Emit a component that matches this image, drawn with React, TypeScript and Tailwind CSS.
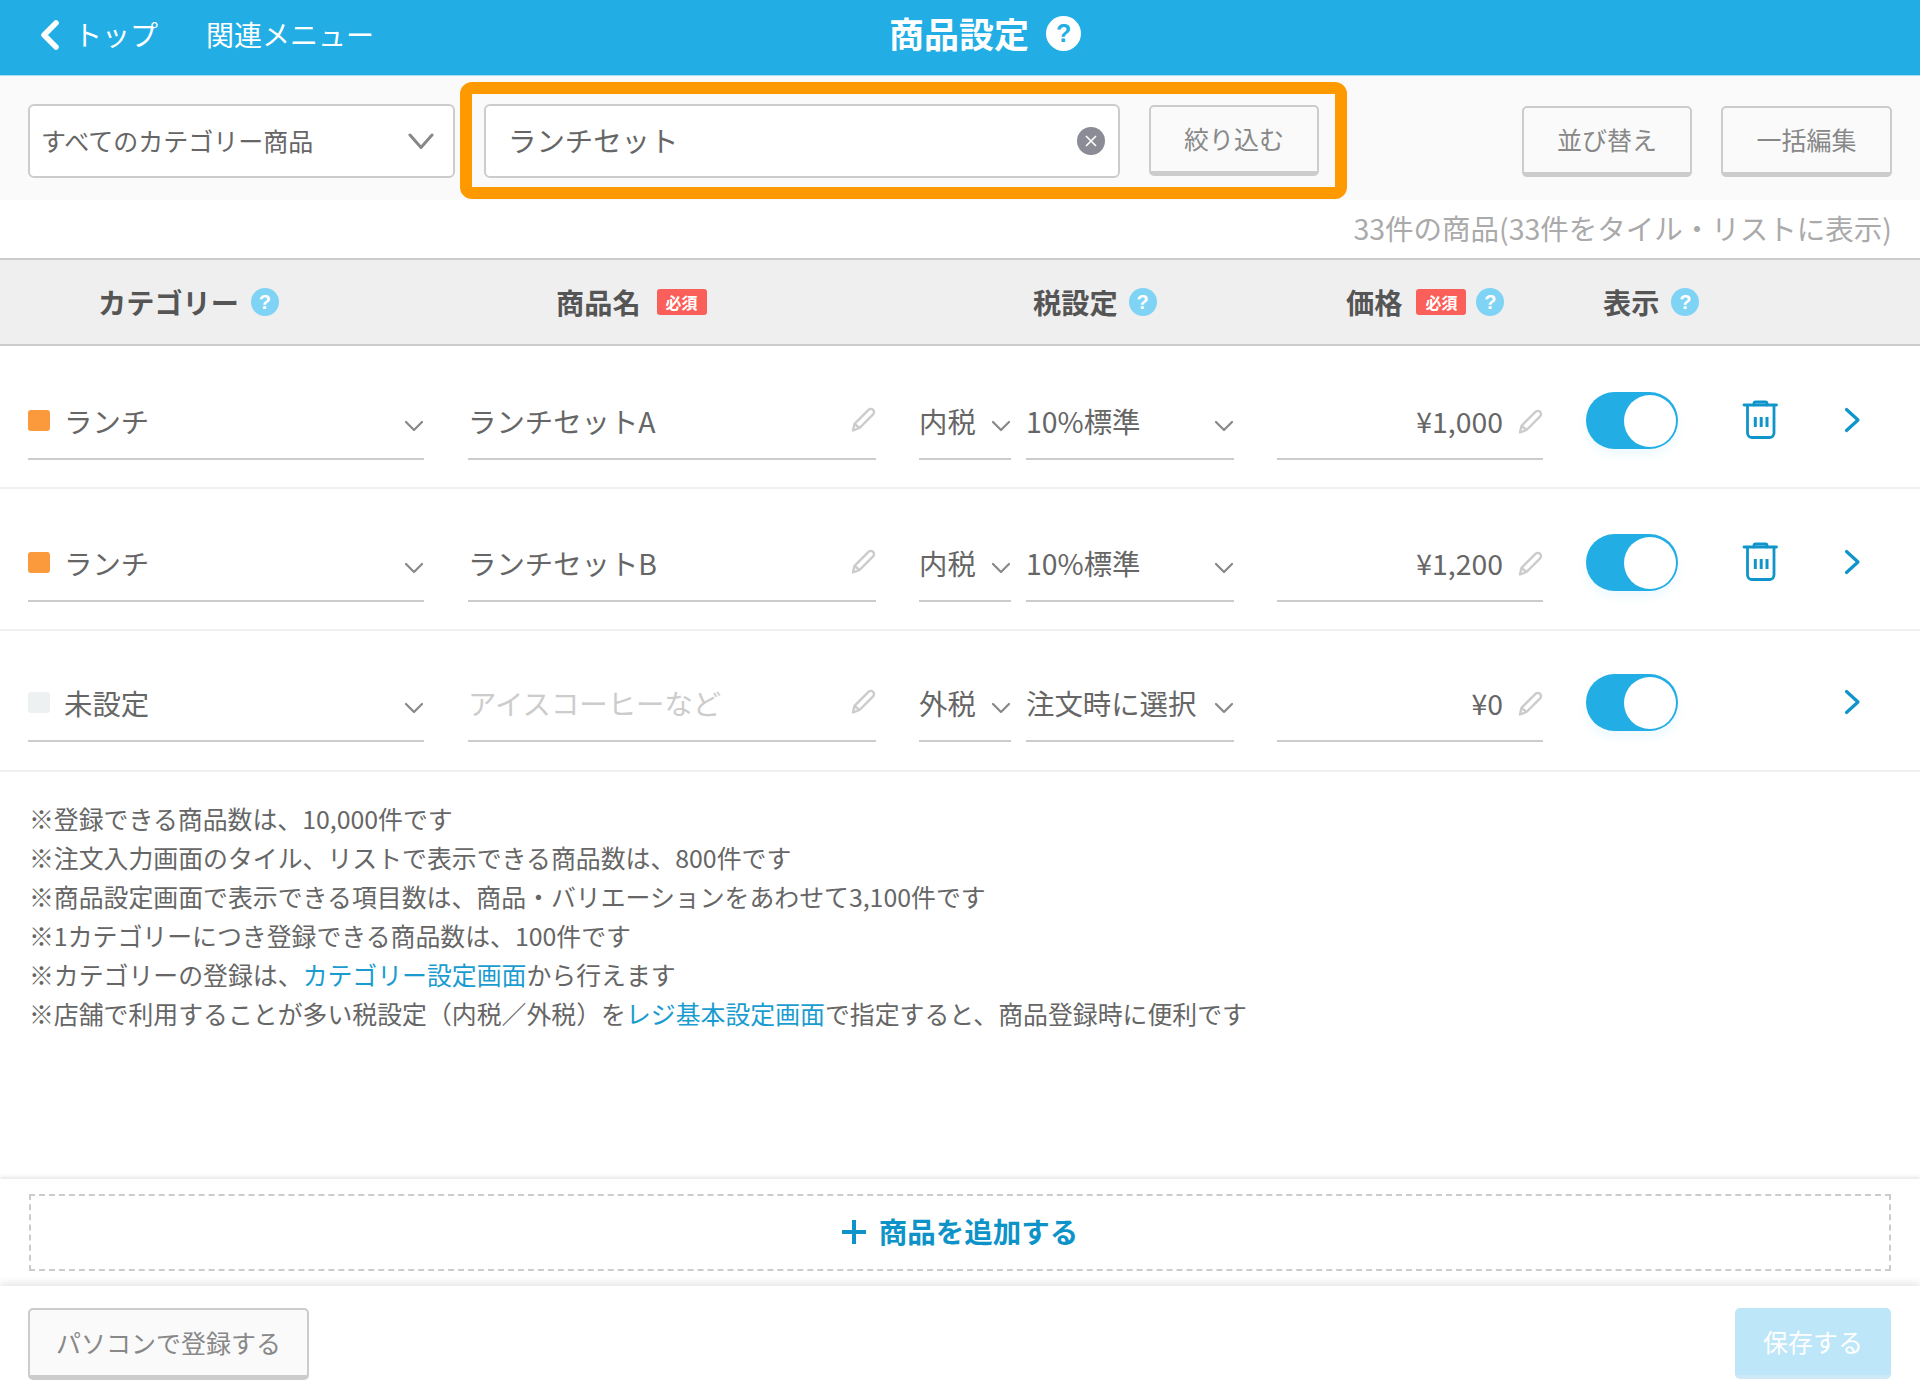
import React from "react";

const Help = ({ white }: { white?: boolean }) =>
  white ? (
    <span className="flex h-[35px] w-[35px] shrink-0 items-center justify-center rounded-full bg-white font-['Liberation_Sans',sans-serif] text-[25px] leading-none font-bold text-[#22aee5]">
      ?
    </span>
  ) : (
    <span className="flex h-[28px] w-[28px] shrink-0 items-center justify-center rounded-full bg-[#7fd3f5] font-['Liberation_Sans',sans-serif] text-[20px] leading-none font-bold text-white">
      ?
    </span>
  );

const Badge = () => (
  <span className="flex h-[26px] w-[50px] shrink-0 items-center justify-center rounded-[3px] bg-[#fb5f5a] text-[16px] leading-none font-bold text-white">
    必須
  </span>
);

const SmallChevron = ({ className = "" }: { className?: string }) => (
  <svg width="20" height="12" viewBox="0 0 20 12" fill="none" className={`shrink-0 ${className}`}>
    <path d="M2 2 L10 10 L18 2" stroke="#888888" strokeWidth="2.2" strokeLinecap="round" strokeLinejoin="round" />
  </svg>
);

const Pencil = () => (
  <svg width="26" height="26" viewBox="0 0 26 26" fill="none" className="shrink-0">
    <path
      d="M18.5 2.8 a3.2 3.2 0 0 1 4.6 4.6 L9.5 21 L3 23.5 L4.5 16.8 Z M4.5 16.8 L9.5 21"
      stroke="#cccccc"
      strokeWidth="2.4"
      strokeLinejoin="round"
    />
  </svg>
);

const Trash = () => (
  <svg width="36" height="40" viewBox="0 0 36 40" fill="none" className="shrink-0">
    <g stroke="#1095ca" strokeLinecap="round" strokeLinejoin="round">
      <path d="M2 5 H34.5" strokeWidth="2.8" />
      <path d="M12 5 V3.5 Q12 2 13.5 2 H23.5 Q25 2 25 3.5 V5" strokeWidth="2.8" />
      <path d="M5.5 6 V33 a4.5 4.5 0 0 0 4.5 4.5 H27.5 a4.5 4.5 0 0 0 4.5 -4.5 V6" strokeWidth="2.8" />
    </g>
    <path d="M13.3 17 V27 M19.2 17 V27 M25 17 V27" stroke="#1095ca" strokeWidth="3" />
  </svg>
);

const RightChevron = () => (
  <svg width="18" height="26" viewBox="0 0 18 26" fill="none" className="shrink-0">
    <path d="M2.5 2.5 L14 13 L2.5 23.5" stroke="#1095ca" strokeWidth="3.2" strokeLinecap="round" strokeLinejoin="round" />
  </svg>
);

const Toggle = () => (
  <div className="-mt-[6px] flex h-[57px] w-[92px] shrink-0 items-center justify-end rounded-full bg-[#22aee5] pr-[2px] shadow-[0_6px_10px_rgba(34,174,229,0.08)]">
    <div className="h-[52px] w-[52px] rounded-full bg-white" />
  </div>
);

const Field = ({ className, children }: { className: string; children: React.ReactNode }) => (
  <div className={`flex h-[62px] shrink-0 items-center border-b-2 border-[#cccccc] pb-[13px] text-[28.4px] text-[#666666] ${className}`}>
    {children}
  </div>
);

type Row = {
  swatch: string;
  cat: string;
  name: string;
  placeholder?: boolean;
  tax: string;
  rate: string;
  price: string;
  trash: boolean;
  rowClass: string;
};

const rows: Row[] = [
  { swatch: "bg-[#fb9a3c]", cat: "ランチ", name: "ランチセットA", tax: "内税", rate: "10%標準", price: "¥1,000", trash: true, rowClass: "h-[143px] pt-[52px]" },
  { swatch: "bg-[#fb9a3c]", cat: "ランチ", name: "ランチセットB", tax: "内税", rate: "10%標準", price: "¥1,200", trash: true, rowClass: "h-[142px] pt-[51px]" },
  { swatch: "bg-[#eef1f1]", cat: "未設定", name: "アイスコーヒーなど", placeholder: true, tax: "外税", rate: "注文時に選択", price: "¥0", trash: false, rowClass: "h-[141px] pt-[49px]" },
];

const outlineBtn =
  "flex shrink-0 items-center justify-center rounded-[5px] border-2 border-b-[5px] border-[#cccccc] bg-[#fafafa] text-[25px] text-[#888888]";

export default function App() {
  return (
    <div className="flex h-[1400px] w-[1920px] flex-col overflow-hidden bg-white font-['Noto_Sans_CJK_JP',sans-serif] text-[#666666]">
      {/* top bar */}
      <header className="relative flex h-[76px] shrink-0 items-center border-b border-[#a6dff5] bg-[#22aee5] pl-[39px] text-white">
        <svg width="22" height="30" viewBox="0 0 22 30" fill="none" className="mb-[6px] shrink-0">
          <path d="M17 3 L5 15 L17 27" stroke="#ffffff" strokeWidth="5.5" strokeLinecap="round" strokeLinejoin="round" />
        </svg>
        <span className="mb-[8px] ml-[13px] text-[28px]">トップ</span>
        <span className="mb-[8px] ml-[48px] text-[28px]">関連メニュー</span>
        <div className="absolute top-[15px] left-[889px] flex items-center gap-[17px]">
          <span className="text-[35px] leading-[36px] font-bold">商品設定</span>
          <Help white />
        </div>
      </header>

      {/* toolbar */}
      <div className="flex h-[124px] shrink-0 items-end bg-[#fafafa] pr-[28px] pl-[28px]">
        <div className="mb-[22px] flex h-[74px] w-[427px] shrink-0 items-center justify-between rounded-[6px] border-2 border-[#cccccc] bg-white pr-[19px] pl-[11px] text-[25px] text-[#666666]">
          <span>すべてのカテゴリー商品</span>
          <svg width="26" height="17" viewBox="0 0 26 17" fill="none">
            <path d="M2 2 L13 14.5 L24 2" stroke="#888888" strokeWidth="3" strokeLinecap="round" strokeLinejoin="round" />
          </svg>
        </div>
        <div className="mb-[1px] ml-[5px] flex h-[117px] w-[887px] shrink-0 items-center rounded-[12px] border-[12px] border-[#ff9900] pl-[12px]">
          <div className="flex h-[74px] w-[636px] shrink-0 items-center justify-between rounded-[6px] border-2 border-[#cccccc] bg-white pr-[13px] pl-[22px] text-[28.4px] text-[#666666]">
            <span>ランチセット</span>
            <svg width="28" height="28" viewBox="0 0 28 28" className="shrink-0">
              <circle cx="14" cy="14" r="14" fill="#8c8c96" />
              <path d="M9 9 L19 19 M19 9 L9 19" stroke="#ffffff" strokeWidth="1.6" />
            </svg>
          </div>
          <button className={`ml-[29px] h-[71px] w-[170px] ${outlineBtn}`}>絞り込む</button>
        </div>
        <div className="mb-[23px] ml-auto flex gap-[29px]">
          <button className={`h-[71px] w-[170px] ${outlineBtn}`}>並び替え</button>
          <button className={`h-[71px] w-[171px] ${outlineBtn}`}>一括編集</button>
        </div>
      </div>

      {/* count */}
      <div className="flex h-[58px] shrink-0 items-center justify-end pr-[28px] pb-[2px] text-[28.5px] text-[#aaaaaa]">
        33件の商品(33件をタイル・リストに表示)
      </div>

      {/* table head */}
      <div className="flex h-[88px] shrink-0 items-center border-y-2 border-[#cccccc] bg-[#efefef] pl-[28px] text-[28.2px] font-bold text-[#555555]">
        <div className="flex w-[396px] shrink-0 items-center gap-[12px] pl-[70px]">
          <span>カテゴリー</span>
          <Help />
        </div>
        <div className="ml-[44px] flex w-[408px] shrink-0 items-center gap-[16px] pl-[88px]">
          <span>商品名</span>
          <Badge />
        </div>
        <div className="ml-[43px] flex w-[315px] shrink-0 items-center gap-[11px] pl-[114px]">
          <span>税設定</span>
          <Help />
        </div>
        <div className="ml-[43px] flex w-[266px] shrink-0 items-center pl-[69px]">
          <span>価格</span>
          <span className="ml-[14px]">
            <Badge />
          </span>
          <span className="ml-[10px]">
            <Help />
          </span>
        </div>
        <div className="ml-[43px] flex shrink-0 items-center gap-[12px] pl-[17px]">
          <span>表示</span>
          <Help />
        </div>
      </div>

      {/* rows */}
      {rows.map((r, i) => (
        <div key={i} className={`flex shrink-0 items-start border-b-2 border-[#efefef] pl-[28px] ${r.rowClass}`}>
          <Field className="w-[396px] justify-between">
            <div className="flex items-center">
              <span className={`mb-[2px] h-[21px] w-[22px] shrink-0 rounded-[3px] ${r.swatch}`} />
              <span className="ml-[14px]">{r.cat}</span>
            </div>
            <SmallChevron className="mt-[9px]" />
          </Field>
          <Field className="ml-[44px] w-[408px] justify-between">
            <span className={r.placeholder ? "text-[#cccccc]" : ""}>{r.name}</span>
            <span className="-mt-[3px]">
              <Pencil />
            </span>
          </Field>
          <Field className="ml-[43px] w-[92px] justify-between">
            <span>{r.tax}</span>
            <SmallChevron className="mt-[9px]" />
          </Field>
          <Field className="ml-[15px] w-[208px] justify-between">
            <span>{r.rate}</span>
            <SmallChevron className="mt-[9px]" />
          </Field>
          <Field className="ml-[43px] w-[266px] justify-end">
            <span>{r.price}</span>
            <span className="ml-[14px]">
              <Pencil />
            </span>
          </Field>
          <div className="ml-[43px]">
            <Toggle />
          </div>
          <div className="mt-[2px] ml-[64px] w-[36px] shrink-0">{r.trash && <Trash />}</div>
          <div className="mt-[9px] ml-[66px] shrink-0">
            <RightChevron />
          </div>
        </div>
      ))}

      {/* notes */}
      <div className="min-h-0 flex-1 pt-[27px] pl-[29px] text-[24.88px] leading-[39px] text-[#666666]">
        <p>※登録できる商品数は、10,000件です</p>
        <p>※注文入力画面のタイル、リストで表示できる商品数は、800件です</p>
        <p>※商品設定画面で表示できる項目数は、商品・バリエーションをあわせて3,100件です</p>
        <p>※1カテゴリーにつき登録できる商品数は、100件です</p>
        <p>
          ※カテゴリーの登録は、<span className="text-[#1a9cd0]">カテゴリー設定画面</span>から行えます
        </p>
        <p>
          ※店舗で利用することが多い税設定（内税／外税）を<span className="text-[#1a9cd0]">レジ基本設定画面</span>で指定すると、商品登録時に便利です
        </p>
      </div>

      {/* add section */}
      <div className="relative h-[107px] shrink-0 bg-white px-[29px] pt-[15px] shadow-[0_-2px_4px_rgba(0,0,0,0.1)]">
        <div className="flex h-[77px] items-center justify-center gap-[13px] border-2 border-dashed border-[#cccccc] pb-[2px] text-[28.5px] font-bold text-[#0d93c8]">
          <svg width="24" height="24" viewBox="0 0 24 24" className="shrink-0">
            <path d="M12 0 V24 M0 12 H24" stroke="#0d93c8" strokeWidth="4" />
          </svg>
          <span>商品を追加する</span>
        </div>
      </div>

      {/* footer */}
      <footer className="relative flex h-[114px] shrink-0 items-start justify-between bg-white pt-[22px] pr-[29px] pl-[28px] shadow-[0_-3px_8px_rgba(0,0,0,0.1)]">
        <button className={`h-[72px] w-[281px] ${outlineBtn}`}>パソコンで登録する</button>
        <button className="flex h-[71px] w-[156px] items-center justify-center rounded-[5px] border-b-[4px] border-[#cde9f5] bg-[#bde6f8] text-[25px] text-white">
          保存する
        </button>
      </footer>
    </div>
  );
}
